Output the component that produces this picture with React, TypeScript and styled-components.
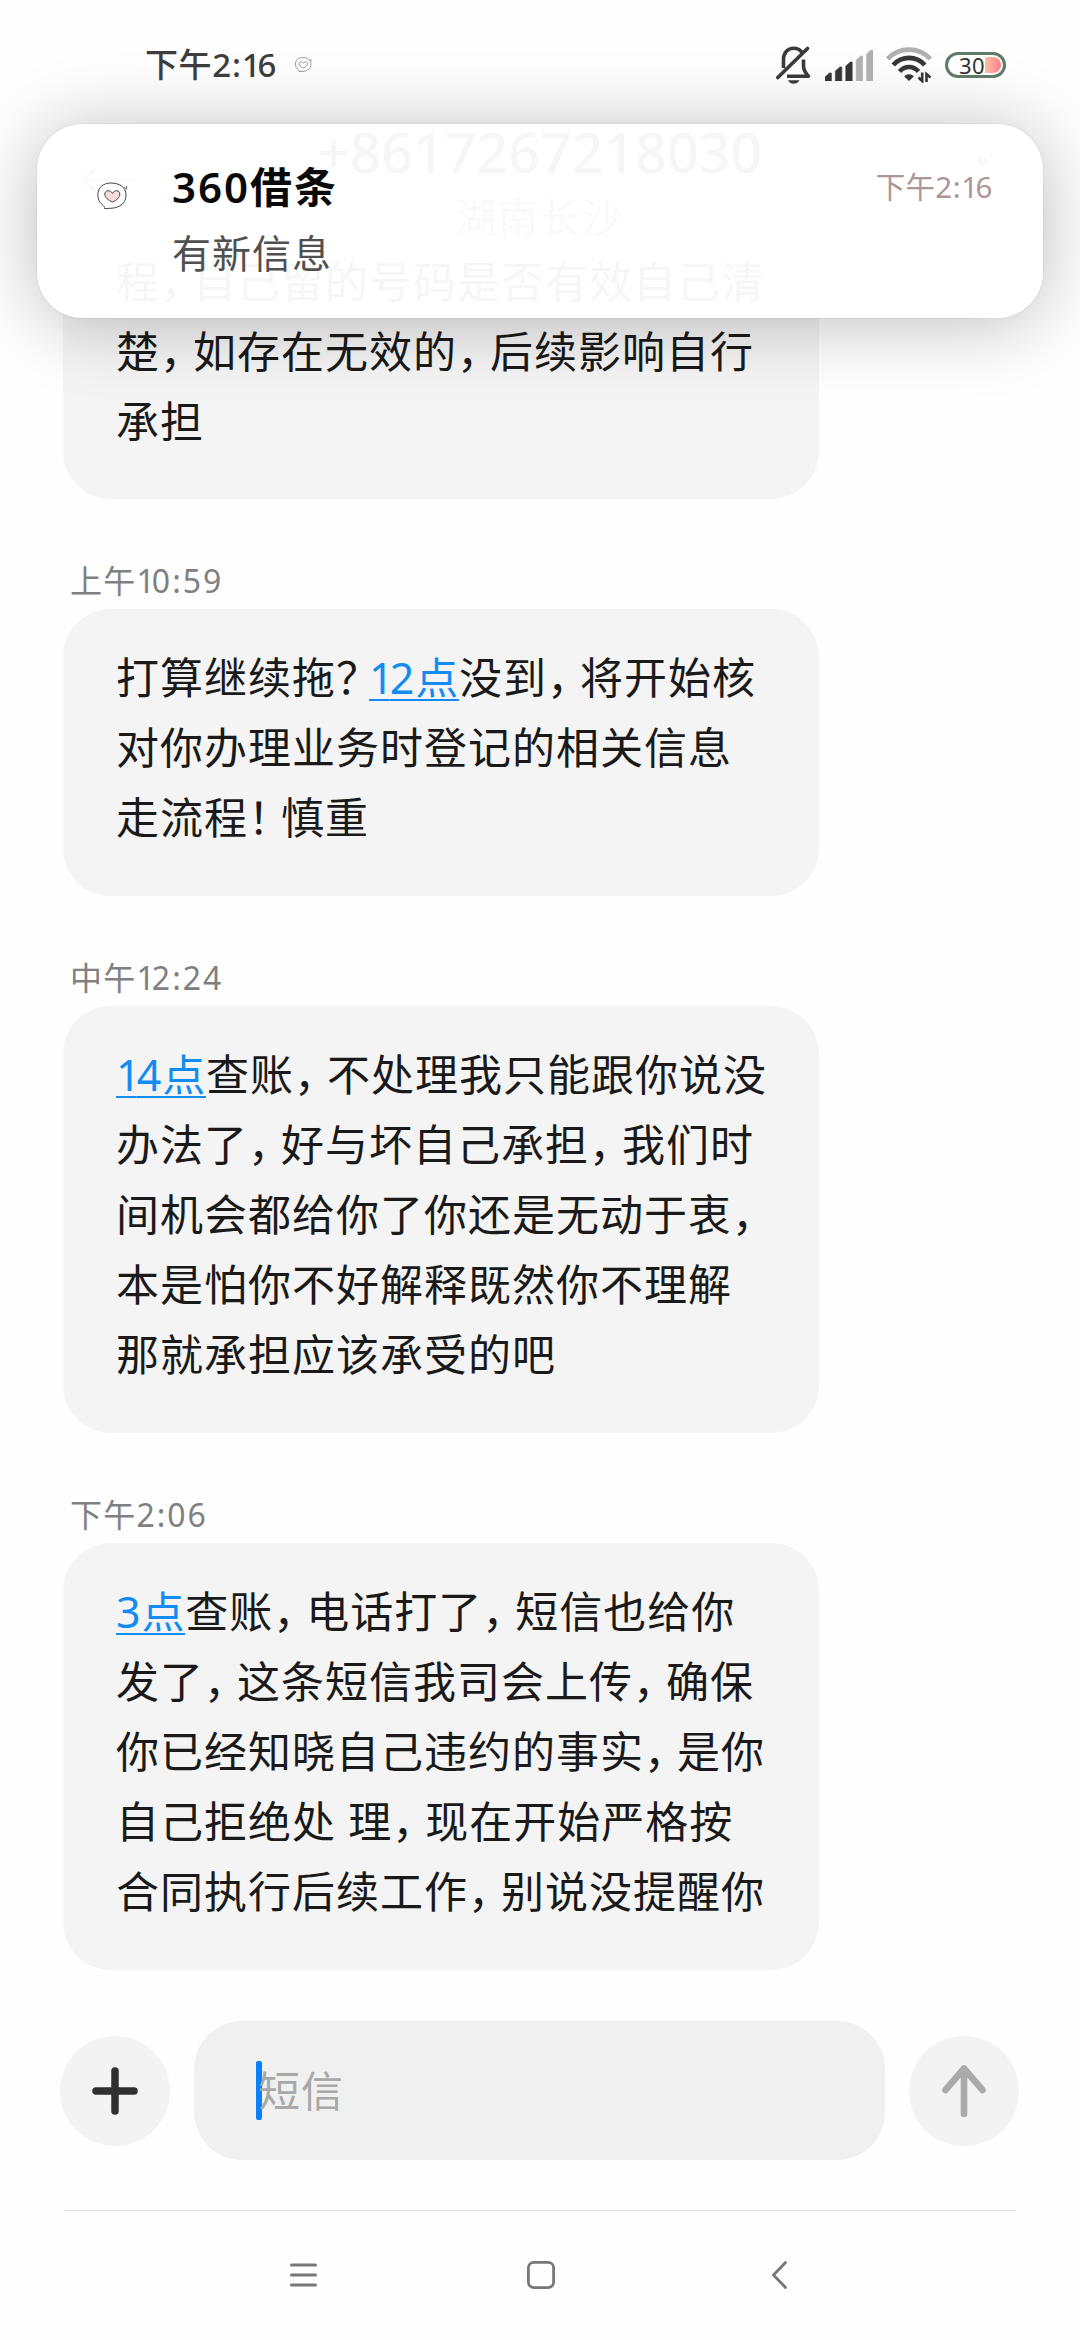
import React from 'react';
import styled, { createGlobalStyle, css } from 'styled-components';

const GlobalStyle = createGlobalStyle`
  * { box-sizing: border-box; }
  body {
    margin: 0;
    background: #fefefe;
    font-family: "Noto Sans", "Noto Sans CJK SC", sans-serif;
  }
`;

const Screen = styled.div`
  position: relative;
  width: 1080px;
  height: 2340px;
  overflow: hidden;
  display: flex;
  flex-direction: column;
  background: #fefefe;
  color: #1a1a1a;
`;

const StatusBar = styled.div`
  position: relative;
  z-index: 3;
  flex: none;
  height: 124px;
  padding: 42px 74px 0 145px;
  display: flex;
  align-items: flex-start;
  justify-content: space-between;
`;

const StatusGroup = styled.div<{ $gap: number }>`
  display: flex;
  align-items: center;
  height: 46px;
  gap: ${(p) => p.$gap}px;
`;

const Clock = styled.span`
  font-size: 33px;
  font-weight: 500;
  line-height: 46px;
  letter-spacing: 0.6px;
  color: #3d3d3d;
`;

const Digits = styled.span<{ $spacing: number }>`
  letter-spacing: ${(p) => p.$spacing}px;
`;

const NarrowOne = styled.span`
  letter-spacing: -0.09em;
`;

const ChatHeader = styled.header`
  flex: none;
  height: 123px;
  padding: 0 80px;
  display: grid;
  grid-template-columns: 57px 1fr 57px;
`;

const HeaderIcon = styled.div<{ $end?: boolean }>`
  display: flex;
  padding-top: ${(p) => (p.$end ? 31 : 41)}px;
  justify-content: ${(p) => (p.$end ? 'flex-end' : 'flex-start')};
`;

const Contact = styled.div`
  display: flex;
  flex-direction: column;
  align-items: center;
`;

const ContactNumber = styled.span`
  font-size: 55.5px;
  font-weight: 500;
  line-height: 55px;
  white-space: nowrap;
`;

const ContactPlace = styled.span`
  font-size: 40px;
  line-height: 76px;
  letter-spacing: 1.8px;
  color: #6a6a6a;
`;

const Thread = styled.main`
  flex: none;
  height: 1723px;
  padding: 0 63px;
  display: flex;
  flex-direction: column;
`;

const Stamp = styled.time`
  height: 110px;
  padding: 62px 0 0 7px;
  font-size: 32px;
  line-height: 40px;
  letter-spacing: 1.2px;
  color: #808080;
`;

const Bubble = styled.div<{ $cut?: boolean }>`
  width: 756px;
  padding: ${(p) => (p.$cut ? 0 : 34)}px 0 ${(p) => (p.$cut ? 42 : 43)}px 53px;
  border-radius: ${(p) => (p.$cut ? '0 0 48px 48px' : '48px')};
  background: #f4f4f4;
`;

const Line = styled.div`
  font-size: 43px;
  line-height: 70px;
  letter-spacing: 1px;
  white-space: pre;
`;

const TimeLink = styled.a`
  color: #128cf3;
  letter-spacing: 0.8px;
  text-decoration: underline;
  text-decoration-thickness: 2px;
  text-underline-offset: 5px;
  text-decoration-skip-ink: none;
`;

const Mark = styled.span`
  font-feature-settings: "halt";
  letter-spacing: 11.5px;
`;

const Composer = styled.div`
  flex: none;
  height: 240px;
  padding: 51px 61px 0 60px;
  display: flex;
  gap: 24px;
  align-items: flex-start;
`;

const RoundButton = styled.button`
  flex: none;
  width: 110px;
  height: 110px;
  margin-top: 15px;
  padding: 0;
  border: none;
  border-radius: 50%;
  background: #f3f3f3;
  display: grid;
  place-items: center;
`;

const Field = styled.div`
  flex: 1;
  height: 139px;
  border-radius: 48px;
  background: #f0f0f0;
  padding-left: 62px;
  display: flex;
  align-items: center;
`;

const Caret = styled.span`
  width: 6px;
  height: 59px;
  border-radius: 2px;
  background: #0a80ff;
`;

const Placeholder = styled.span`
  margin-left: -4px;
  font-size: 42px;
  line-height: 60px;
  letter-spacing: 1px;
  color: #a8a8a8;
`;

const Rule = styled.div`
  flex: none;
  height: 1px;
  margin: 0 64px;
  background: #e0e0e0;
`;

const NavBar = styled.nav`
  flex: 1;
  padding: 0 181px 2px 184px;
  display: grid;
  grid-template-columns: repeat(3, 1fr);
  align-items: center;
  justify-items: center;
`;

const card = css`
  background: rgba(255, 255, 255, 0.962);
  border-radius: 46px;
  box-shadow: 0 5px 72px rgba(0, 0, 0, 0.26), 0 0 2px rgba(0, 0, 0, 0.14);
`;

const Notification = styled.section`
  position: absolute;
  z-index: 2;
  left: 37px;
  top: 124px;
  width: 1006px;
  height: 194px;
  padding: 34px 50px 0 60px;
  display: flex;
  ${card}
`;

const NotificationIcon = styled.div`
  flex: none;
  width: 75px;
  padding-top: 24px;
`;

const NotificationBody = styled.div`
  flex: 1;
  display: flex;
  flex-direction: column;
`;

const NotificationTitle = styled.strong`
  font-size: 42px;
  font-weight: 600;
  line-height: 57px;
  letter-spacing: 2px;
  color: #0a0a0a;
`;

const NotificationText = styled.span`
  font-size: 39px;
  line-height: 76px;
  letter-spacing: 1px;
  color: #505050;
`;

const NotificationTime = styled.time`
  padding-top: 8px;
  font-size: 29.5px;
  line-height: 42px;
  letter-spacing: 0.3px;
  color: #ab9696;
`;

const HeartBubble = ({ size, tint }: { size: number; tint: string }) => (
  <svg width={size} height={(size * 28) / 31} viewBox="0 0 31 28" fill="none" stroke="#4a4444" strokeWidth="1">
    <path d="M7.500 26.600C7.800 25 7 24 5.500 22.800C2.500 20.500 .8 17 .8 13C.8 5.500 6.500 1 14 1C22 1 29 5 29 13C29 21 23 25.500 15 26.200Z" fill="#fff" />
    <path d="M15.500 20C11 18 7.800 15.500 7.800 12C7.800 8 13.500 7.500 15.500 11.500C17.500 7.500 22.800 8 22.800 12C22.800 15.500 19.500 18.500 15.500 20Z" fill={tint} />
    <path d="M27 5L29 6.500M29.800 4L29.300 7.500" strokeWidth="0.800" />
  </svg>
);

const MutedBell = () => (
  <svg width="36" height="38" viewBox="0 0 36 38" fill="none" stroke="#3a3a3a" strokeWidth="3.600">
    <path d="M7.500 22V13.500C7.500 6.500 12 2.200 17.500 2.200C21 2.200 24 3.500 26 6.500" />
    <path d="M27.500 13.500V20C27.500 24 29 26.500 32.500 30.300H11" strokeLinejoin="round" />
    <path d="M1.800 31.500L31.500 2.500" strokeLinecap="round" />
    <path d="M12 34.300H23.500C22 37 20 37.800 17.700 37.800S13.500 37 12 34.300Z" fill="#3a3a3a" stroke="none" />
  </svg>
);

const SIGNAL = [
  { h: 8, on: true },
  { h: 14, on: true },
  { h: 19, on: true },
  { h: 25, on: false },
  { h: 31, on: false },
];

const Signal = () => (
  <svg width="48" height="31" viewBox="0 0 48 31">
    {SIGNAL.map(({ h, on }, i) => (
      <path
        key={h}
        d={`M${i * 10.4} ${31 - h + 4}L${i * 10.4 + 4.5} ${31 - h}H${i * 10.4 + 6.4}V31H${i * 10.4}Z`}
        fill={on ? '#363636' : '#b0b0b0'}
        stroke={on ? '#363636' : '#b0b0b0'}
        strokeWidth="0.600"
        strokeLinejoin="round"
      />
    ))}
  </svg>
);

const Wifi = () => (
  <svg width="46" height="36" viewBox="0 0 46 36" fill="none" stroke="#363636" strokeWidth="4.700">
    <path d="M1.600 12C13 -.5 33 -.5 44.400 12" stroke="#b0b0b0" />
    <path d="M7.200 18C16 8.500 30 8.500 38.800 18" />
    <path d="M13.500 24.500C19 18.500 27 18.500 32.500 24.500" />
    <path d="M23 34L18.200 29.500C20.500 26.500 25.500 26.500 27.800 29.500Z" fill="#363636" stroke="none" />
    <path d="M36.200 25.500V34L32.500 30.500M40.500 35V27L44.500 30.500" strokeWidth="2.600" />
  </svg>
);

const Battery = styled.div`
  width: 61px;
  height: 26px;
  border: 3px solid #5f7a66;
  border-radius: 13px;
  background: #fff;
  display: flex;
  align-items: center;
  padding: 0 2px 0 11px;
`;

const BatteryLevel = styled.span`
  font-size: 22px;
  line-height: 20px;
  letter-spacing: 0.4px;
  color: #333;
`;

const BatteryFill = styled.span`
  flex: 1;
  height: 16px;
  border-radius: 0 8px 8px 0;
  background: linear-gradient(90deg, #fbc3a4, #fb7f8c);
`;

type Part = string | { link: string };
type Message = { time?: string; lines: Part[][] };

const MESSAGES: Message[] = [
  { lines: [['程，自己留的号码是否有效自己清'], ['楚，如存在无效的，后续影响自行'], ['承担']] },
  {
    time: '上午10:59',
    lines: [
      ['打算继续拖？', { link: '12点' }, '没到，将开始核'],
      ['对你办理业务时登记的相关信息'],
      ['走流程！慎重'],
    ],
  },
  {
    time: '中午12:24',
    lines: [
      [{ link: '14点' }, '查账，不处理我只能跟你说没'],
      ['办法了，好与坏自己承担，我们时'],
      ['间机会都给你了你还是无动于衷，'],
      ['本是怕你不好解释既然你不理解'],
      ['那就承担应该承受的吧'],
    ],
  },
  {
    time: '下午2:06',
    lines: [
      [{ link: '3点' }, '查账，电话打了，短信也给你'],
      ['发了，这条短信我司会上传，确保'],
      ['你已经知晓自己违约的事实，是你'],
      ['自己拒绝处 理，现在开始严格按'],
      ['合同执行后续工作，别说没提醒你'],
    ],
  },
];

const withNarrowOnes = (text: string) =>
  text.split(/(1)/).map((piece, i) => (piece === '1' ? <NarrowOne key={i}>1</NarrowOne> : piece));

const ClockText = ({ value, spacing }: { value: string; spacing: number }) => (
  <>
    {value.slice(0, 2)}
    <Digits $spacing={spacing}>{withNarrowOnes(value.slice(2))}</Digits>
  </>
);

const renderPart = (part: Part, key: number) => {
  if (typeof part !== 'string') return <TimeLink key={key}>{withNarrowOnes(part.link)}</TimeLink>;
  return (
    <React.Fragment key={key}>
      {part.split(/([，！？])/).map((piece, i) => (/^[，！？]$/.test(piece) ? <Mark key={i}>{piece}</Mark> : piece))}
    </React.Fragment>
  );
};

export default function App() {
  return (
    <>
      <GlobalStyle />
      <Screen>
        <StatusBar>
          <StatusGroup $gap={18}>
            <Clock>
              <ClockText value="下午2:16" spacing={0.8} />
            </Clock>
            <HeartBubble size={17} tint="none" />
          </StatusGroup>
          <StatusGroup $gap={13}>
            <MutedBell />
            <Signal />
            <Wifi />
            <Battery>
              <BatteryLevel>30</BatteryLevel>
              <BatteryFill />
            </Battery>
          </StatusGroup>
        </StatusBar>

        <ChatHeader>
          <HeaderIcon>
            <svg width="57" height="30" viewBox="0 0 57 30" fill="none" stroke="#777" strokeWidth="3.500">
              <path d="M55 15H3M17 2L3 15L17 28" />
            </svg>
          </HeaderIcon>
          <Contact>
            <ContactNumber>+8617267218030</ContactNumber>
            <ContactPlace>湖南长沙</ContactPlace>
          </Contact>
          <HeaderIcon $end>
            <svg width="24" height="12" viewBox="0 0 24 12">
              <circle cx="6" cy="6" r="5" fill="#555" />
            </svg>
          </HeaderIcon>
        </ChatHeader>

        <Thread>
          {MESSAGES.map((message, i) => (
            <React.Fragment key={i}>
              {message.time && (
                <Stamp>
                  <ClockText value={message.time} spacing={2} />
                </Stamp>
              )}
              <Bubble $cut={!message.time}>
                {message.lines.map((line, j) => (
                  <Line key={j}>{line.map(renderPart)}</Line>
                ))}
              </Bubble>
            </React.Fragment>
          ))}
        </Thread>

        <Composer>
          <RoundButton aria-label="添加">
            <svg width="46" height="48" viewBox="0 0 46 48" stroke="#303030" strokeWidth="7.500" strokeLinecap="round">
              <path d="M23 4V44M4 24H42" />
            </svg>
          </RoundButton>
          <Field>
            <Caret />
            <Placeholder>短信</Placeholder>
          </Field>
          <RoundButton aria-label="发送">
            <svg width="46" height="54" viewBox="0 0 46 54" fill="none" stroke="#aaa" strokeWidth="6.600" strokeLinecap="round" strokeLinejoin="round">
              <path d="M23 50V4.500M4.500 26L23 4.500L41.500 26" />
            </svg>
          </RoundButton>
        </Composer>
        <Rule />

        <NavBar>
          <svg width="27" height="24" viewBox="0 0 27 24" stroke="#777" strokeWidth="3" strokeLinecap="round">
            <path d="M1.500 2H25.500M1.500 12H25.500M1.500 22H25.500" />
          </svg>
          <svg width="28" height="28" viewBox="0 0 28 28" fill="none" stroke="#777" strokeWidth="2.800">
            <rect x="1.400" y="1.400" width="25.200" height="25.200" rx="5.500" />
          </svg>
          <svg width="15" height="28" viewBox="0 0 15 28" fill="none" stroke="#777" strokeWidth="2.800" strokeLinecap="round" strokeLinejoin="round">
            <path d="M13.500 1.500L1.500 14L13.500 26.500" />
          </svg>
        </NavBar>

        <Notification>
          <NotificationIcon>
            <HeartBubble size={31} tint="#fbdcdc" />
          </NotificationIcon>
          <NotificationBody>
            <NotificationTitle>360借条</NotificationTitle>
            <NotificationText>有新信息</NotificationText>
          </NotificationBody>
          <NotificationTime>
            <ClockText value="下午2:16" spacing={0.6} />
          </NotificationTime>
        </Notification>
      </Screen>
    </>
  );
}
